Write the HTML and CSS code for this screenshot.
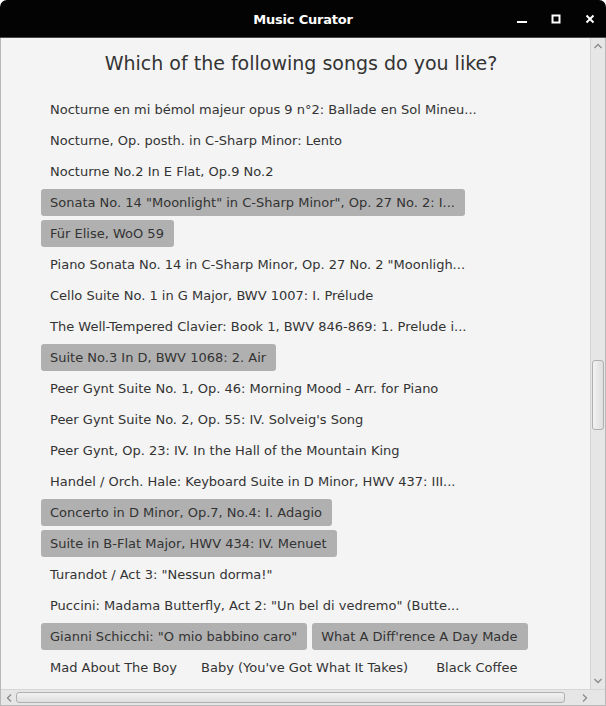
FILE: index.html
```html
<!DOCTYPE html>
<html>
<head>
<meta charset="utf-8">
<link rel="stylesheet" href="styles.css">
</head>
<body>
<div class="window">
  <div class="titlebar">
    <div class="title">Music Curator</div>
    <div class="controls">
      <span class="ctl"><svg width="12" height="12" viewBox="0 0 12 12"><rect x="1" y="8" width="10" height="2" fill="#fff"/></svg></span>
      <span class="ctl"><svg width="12" height="12" viewBox="0 0 12 12"><rect x="2.5" y="2.5" width="7" height="7" fill="none" stroke="#fff" stroke-width="2"/></svg></span>
      <span class="ctl"><svg width="12" height="12" viewBox="0 0 12 12"><path d="M2.5 2.5 L9.5 9.5 M9.5 2.5 L2.5 9.5" stroke="#fff" stroke-width="2"/></svg></span>
    </div>
  </div>
  <div class="frame">
    <div class="main">
      <div class="viewport">
        <div class="content">
          <h1 class="heading">Which of the following songs do you like?</h1>
          <div class="songs">
            <span class="song">Nocturne en mi bémol majeur opus 9 n°2: Ballade en Sol Mineu...</span>
            <span class="song">Nocturne, Op. posth. in C-Sharp Minor: Lento</span>
            <span class="song">Nocturne No.2 In E Flat, Op.9 No.2</span>
            <span class="song sel">Sonata No. 14 "Moonlight" in C-Sharp Minor", Op. 27 No. 2: I...</span>
            <span class="song sel">Für Elise, WoO 59</span>
            <span class="song">Piano Sonata No. 14 in C-Sharp Minor, Op. 27 No. 2 "Moonligh...</span>
            <span class="song">Cello Suite No. 1 in G Major, BWV 1007: I. Prélude</span>
            <span class="song">The Well-Tempered Clavier: Book 1, BWV 846-869: 1. Prelude i...</span>
            <span class="song sel">Suite No.3 In D, BWV 1068: 2. Air</span>
            <span class="song">Peer Gynt Suite No. 1, Op. 46: Morning Mood - Arr. for Piano</span>
            <span class="song">Peer Gynt Suite No. 2, Op. 55: IV. Solveig's Song</span>
            <span class="song">Peer Gynt, Op. 23: IV. In the Hall of the Mountain King</span>
            <span class="song">Handel / Orch. Hale: Keyboard Suite in D Minor, HWV 437: III...</span>
            <span class="song sel">Concerto in D Minor, Op.7, No.4: I. Adagio</span>
            <span class="song sel">Suite in B-Flat Major, HWV 434: IV. Menuet</span>
            <span class="song">Turandot / Act 3: "Nessun dorma!"</span>
            <span class="song">Puccini: Madama Butterfly, Act 2: "Un bel di vedremo" (Butte...</span>
            <span class="song sel">Gianni Schicchi: "O mio babbino caro"</span>
            <span class="song sel">What A Diff'rence A Day Made</span>
            <span class="song">Mad About The Boy</span>
            <span class="song wide">Baby (You've Got What It Takes)</span>
            <span class="song">Black Coffee</span>
          </div>
        </div>
      </div>
      <div class="vscroll">
        <span class="arrow"><svg width="10" height="8" viewBox="0 0 10 8"><path d="M1.5 6 L5 2.5 L8.5 6" fill="none" stroke="#8a8a8a" stroke-width="1.3"/></svg></span>
        <div class="vtrack"><div class="vthumb"></div></div>
        <span class="arrow"><svg width="10" height="8" viewBox="0 0 10 8"><path d="M1.5 2 L5 5.5 L8.5 2" fill="none" stroke="#8a8a8a" stroke-width="1.3"/></svg></span>
      </div>
    </div>
    <div class="hscroll">
      <span class="harrow"><svg width="8" height="10" viewBox="0 0 8 10"><path d="M6 1.5 L2.5 5 L6 8.5" fill="none" stroke="#8a8a8a" stroke-width="1.3"/></svg></span>
      <div class="htrack"><div class="hthumb"></div></div>
      <span class="harrow"><svg width="8" height="10" viewBox="0 0 8 10"><path d="M2 1.5 L5.5 5 L2 8.5" fill="none" stroke="#8a8a8a" stroke-width="1.3"/></svg></span>
      <span class="corner"></span>
    </div>
  </div>
</div>
</body>
</html>
```

FILE: styles.css
```css
* { box-sizing: border-box; }
html, body { margin: 0; padding: 0; background: #ffffff; }
body { width: 606px; height: 706px; overflow: hidden; font-family: "DejaVu Sans", sans-serif; }

.window { width: 606px; height: 706px; display: flex; flex-direction: column; }

.titlebar {
  height: 38px;
  background: #030303;
  border-radius: 7px 7px 0 0;
  border-bottom: 1px solid #4a4a4a;
  display: flex;
  align-items: center;
  justify-content: center;
  position: relative;
}
.title {
  color: #ffffff;
  font-family: "DejaVu Sans", sans-serif;
  font-weight: bold;
  font-size: 13px;
  letter-spacing: -0.2px;
  padding-top: 1px;
}
.controls {
  position: absolute;
  right: 10px;
  top: 13px;
  display: flex;
  gap: 22px;
}
.ctl { width: 12px; height: 12px; display: block; }
.ctl svg { display: block; }

.frame {
  flex: 1;
  display: flex;
  flex-direction: column;
  border-left: 1px solid #b8b8b8;
  border-right: 1px solid #b8b8b8;
  border-bottom: 1px solid #b8b8b8;
  background: #f4f4f4;
  min-height: 0;
}
.main { flex: 1; display: flex; min-height: 0; }
.viewport { flex: 1; overflow: hidden; }
.content { width: 600px; }

.heading {
  margin: 0;
  padding-top: 13px;
  text-align: center;
  font-weight: normal;
  font-size: 19px;
  line-height: 24px;
  color: #333333;
}
.songs {
  margin: 21px 0 0 40px;
  width: 525px;
  display: flex;
  flex-wrap: wrap;
  row-gap: 4px;
  column-gap: 5px;
}
.song {
  height: 27px;
  line-height: 27px;
  padding: 0 10px 0 9px;
  font-size: 13px;
  color: #333333;
  border-radius: 3px;
  white-space: nowrap;
}
.song.wide { padding-right: 14px; }
.song.sel { background: #b0b0b0; }

.vscroll {
  width: 15px;
  background: #e6e6e6;
  border-left: 1px solid #d6d6d6;
  display: flex;
  flex-direction: column;
  align-items: center;
}
.arrow { height: 16px; display: flex; align-items: center; justify-content: center; }
.vtrack { flex: 1; width: 100%; padding: 0 1px; }
.vthumb {
  margin-top: 306px;
  height: 70px;
  width: 12px;
  margin-left: 0px;
  border: 1px solid #b0b0b0;
  border-radius: 3px;
  background: linear-gradient(to right, #f2f2f2, #dedede);
}

.hscroll {
  height: 16px;
  background: #e6e6e6;
  border-top: 1px solid #d6d6d6;
  display: flex;
  align-items: center;
}
.harrow { width: 15px; display: flex; justify-content: center; align-items: center; }
.htrack { flex: 1; padding-right: 12px; }
.hthumb {
  height: 11px;
  border: 1px solid #b0b0b0;
  border-radius: 3px;
  background: linear-gradient(to bottom, #f2f2f2, #dedede);
}
.corner { width: 13px; }
```
